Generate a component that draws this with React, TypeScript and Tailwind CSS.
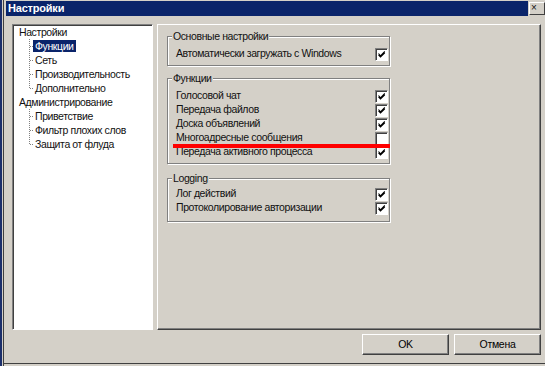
import React from "react";

const font = { fontFamily: '"Liberation Sans", Arial, sans-serif' };

type Row = { label: string; checked: boolean };

const groups: { title: string; rows: Row[] }[] = [
  {
    title: "Основные настройки",
    rows: [{ label: "Автоматически загружать с Windows", checked: true }],
  },
  {
    title: "Функции",
    rows: [
      { label: "Голосовой чат", checked: true },
      { label: "Передача файлов", checked: true },
      { label: "Доска объявлений", checked: true },
      { label: "Многоадресные сообщения", checked: false },
      { label: "Передача активного процесса", checked: true },
    ],
  },
  {
    title: "Logging",
    rows: [
      { label: "Лог действий", checked: true },
      { label: "Протоколирование авторизации", checked: true },
    ],
  },
];

const tree = [
  { label: "Настройки", children: ["Функции", "Сеть", "Производительность", "Дополнительно"] },
  { label: "Администрирование", children: ["Приветствие", "Фильтр плохих слов", "Защита от флуда"] },
];

const CheckBox = ({ checked }: { checked: boolean }) => (
  <div className="w-[13px] h-[13px] bg-white border border-t-[#808080] border-l-[#808080] border-r-white border-b-white shadow-[inset_1px_1px_0_#404040] flex items-center justify-center">
    {checked && (
      <svg width="9" height="9" viewBox="0 0 9 9">
        <path d="M1.5 3.5 L3.5 5.8 L7.8 1.5 M1.5 4.8 L3.5 7 L7.8 2.8" stroke="#000" strokeWidth="1.1" fill="none" />
      </svg>
    )}
  </div>
);

const Connector = ({ last }: { last: boolean }) => (
  <svg width="6" height="14" className="shrink-0">
    <line x1="0.5" y1="0" x2="0.5" y2={last ? 7 : 14} stroke="#808080" strokeDasharray="1 1" />
    <line x1="1" y1="7.5" x2="5" y2="7.5" stroke="#808080" strokeDasharray="1 1" />
  </svg>
);

const Button = ({ children }: { children: React.ReactNode }) => (
  <button className="w-[87px] h-[21px] bg-[#d4d0c8] border border-t-white border-l-white border-r-[#404040] border-b-[#404040] shadow-[inset_-1px_-1px_0_#808080] text-[10.5px] tracking-[-0.3px] text-black">
    {children}
  </button>
);

export default function App() {
  return (
    <div className="w-[545px] h-[366px] bg-[#d4d0c8] flex overflow-hidden text-[#111]" style={font}>
      <div className="w-[2px] bg-[#1c2f6b]" />
      <div className="w-[1px]" />
      <div className="w-[1px] bg-[#404040]" />
      <div className="flex-1 flex flex-col">
        {/* title bar */}
        <div className="flex mt-[1px] h-[15px] pl-[2px]">
          <div className="flex-1 bg-[#0a246a] text-white text-[11px] font-bold leading-[15px] pl-[2px] tracking-[-0.2px]">Настройки</div>
          <div className="w-[16px] h-[13px] mt-[1px] ml-[1px] bg-[#d4d0c8] border border-t-white border-l-white border-r-[#404040] border-b-[#404040] text-[10px] leading-[10px] pl-[1px]">×</div>
        </div>

        <div className="flex mt-[8px] pl-[8px] gap-[4px] h-[306px] text-[10.5px] tracking-[-0.4px]">
          {/* tree */}
          <div className="w-[141px] bg-white border border-t-[#808080] border-l-[#808080] border-r-white border-b-white shadow-[inset_1px_1px_0_#404040] pl-[6px]">
            {tree.map((node) => (
              <div key={node.label}>
                <div className="h-[14px] leading-[14px]">{node.label}</div>
                <div className="pl-[10px]">
                  {node.children.map((c, i) => (
                    <div key={c} className="flex h-[14px] items-center">
                      <Connector last={i === node.children.length - 1} />
                      {c === "Функции" ? (
                        <span className="bg-[#0a246a] text-white px-[2px] -ml-[2px] leading-[12px]">{c}</span>
                      ) : (
                        <span className="leading-[14px]">{c}</span>
                      )}
                    </div>
                  ))}
                </div>
              </div>
            ))}
          </div>

          {/* settings panel */}
          <div className="w-[384px] border border-t-white border-l-white border-r-[#404040] border-b-[#404040] shadow-[inset_-1px_-1px_0_#808080] pl-[9px] pt-[5px] flex flex-col">
            <div className="relative w-[223px] flex flex-col">
              {groups.map((g, gi) => (
                <fieldset
                  key={g.title}
                  className={`border border-[#808080] shadow-[inset_1px_1px_0_#fff,1px_1px_0_#fff] pl-[4px] pr-[1px] ${gi === 0 ? "pt-[4px] pb-[4px]" : gi === 1 ? "mt-[6px] pt-[4px] pb-[4px]" : "mt-[8px] pt-[2px] pb-[6px]"}`}
                >
                  <legend className="px-[1px] leading-[13px] bg-[#d4d0c8]">{g.title}</legend>
                  {g.rows.map((r) => (
                    <div key={r.label} className="flex items-center justify-between h-[14px] pl-[4px]">
                      <span>{r.label}</span>
                      <CheckBox checked={r.checked} />
                    </div>
                  ))}
                </fieldset>
              ))}
              {/* red strike mark */}
              <div className="absolute left-[6px] top-[114px] w-[217px] h-[4px] bg-[#ff0000]" />
            </div>
          </div>
        </div>

        <div className="flex justify-end gap-[5px] pr-[4px] mt-[4px]">
          <Button>OK</Button>
          <Button>Отмена</Button>
        </div>
        <div className="flex-1 border-b border-[#404040] mb-[2px]" />
      </div>
    </div>
  );
}
